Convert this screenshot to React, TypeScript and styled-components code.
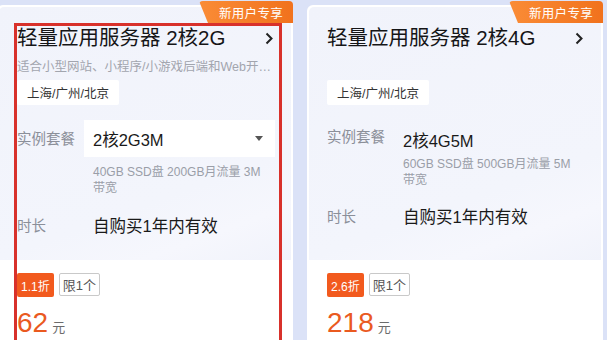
import React from "react";
import styled, { createGlobalStyle } from "styled-components";

const GlobalStyle = createGlobalStyle`
  html, body { margin: 0; padding: 0; background: #dbe2f7; overflow: hidden; }
  body { font-family: "Liberation Sans", "Noto Sans CJK SC", sans-serif; }
  * { box-sizing: border-box; }
`;

const Page = styled.div`
  display: flex;
  gap: 14px;
  margin-left: -3px;
  padding-top: 5px;
  width: 620px;
  height: 340px;
  overflow: hidden;
`;

const Card = styled.div`
  position: relative;
  flex: 0 0 296px;
  width: 296px;
  min-width: 0;
  display: flex;
  flex-direction: column;
  background: #ffffff;
  padding: 2px 2px 0;
  border-radius: 6px 6px 0 0;
  min-height: 345px;
`;

const Badge = styled.div`
  position: absolute;
  top: -4px;
  right: 0;
  width: 94px;
  height: 22px;
  display: flex;
  align-items: center;
  justify-content: center;
  padding-left: 10px;
  color: #fff;
  font-size: 12.5px;
  letter-spacing: 0.3px;
  background: linear-gradient(90deg, #fa8c36, #f1721d);
  border-radius: 4px 4px 0 0;
  clip-path: polygon(0 0, 100% 0, 100% 100%, 9px 100%);
`;

const Highlight = styled.div`
  position: absolute;
  left: 17px;
  top: 18px;
  width: 268px;
  height: 400px;
  border: 3px solid #d8312b;
  pointer-events: none;
`;

const Top = styled.div`
  height: 253px;
  min-width: 0;
  overflow: hidden;
  padding: 17px 18px 0;
  background: linear-gradient(160deg, #f1f3fb 0%, #f3f5fc 70%, #f6f7fd 85%, #f1f3fb 100%);
  border-radius: 5px 5px 0 0;
`;

const Header = styled.div`
  display: flex;
  align-items: center;
  justify-content: space-between;
  height: 28px;
`;

const Title = styled.div`
  font-size: 20.5px;
  line-height: 28px;
  color: #151517;
`;

const Desc = styled.div`
  margin-top: 6px;
  height: 18px;
  font-size: 12.5px;
  line-height: 18px;
  color: #a2a5ae;
  white-space: nowrap;
`;

const Region = styled.div`
  display: inline-flex;
  align-items: center;
  margin-top: 4px;
  height: 25px;
  padding: 0 10px;
  background: #ffffff;
  border-radius: 2px;
  font-size: 12.5px;
  color: #333;
`;

const Row = styled.div<{ $gap: number }>`
  display: grid;
  grid-template-columns: 76px 1fr;
  align-items: center;
  margin-top: ${(p) => p.$gap}px;
`;

const Label = styled.div`
  font-size: 14.5px;
  line-height: 22px;
  color: #8b8f99;
`;

const Value = styled.div`
  font-size: 16.5px;
  line-height: 22px;
  color: #1a1a1a;
`;

const PlainPlan = styled.div`
  padding-top: 9px;
  font-size: 16.5px;
  line-height: 24px;
  color: #1a1a1a;
`;

const Select = styled.div`
  display: flex;
  align-items: center;
  justify-content: space-between;
  height: 37px;
  margin: 0 -2px 0 -9px;
  padding: 0 12px 0 9px;
  background: #ffffff;
  font-size: 16.5px;
  color: #1a1a1a;
`;

const Spec = styled.div<{ $gap: number }>`
  margin: ${(p) => p.$gap}px 0 0 76px;
  font-size: 12px;
  line-height: 16px;
  color: #9a9ea8;
`;

const Bottom = styled.div`
  padding: 13px 18px 0;
`;

const Tags = styled.div`
  display: flex;
  gap: 5px;
`;

const Discount = styled.span`
  display: inline-flex;
  align-items: center;
  height: 24px;
  padding: 0 4px;
  background: #f25a1e;
  color: #fff;
  font-size: 12px;
  border-radius: 2px;
`;

const Limit = styled.span`
  display: inline-flex;
  align-items: center;
  height: 23px;
  padding: 0 3px;
  border: 1px solid #c9c9c9;
  border-radius: 2px;
  color: #555;
  font-size: 13px;
`;

const Price = styled.div`
  margin-top: 10px;
  display: flex;
  align-items: baseline;
  color: #ea5a1f;
  font-size: 28px;
  line-height: 32px;
`;

const Unit = styled.span`
  margin-left: 4px;
  font-size: 13px;
  color: #6b6b6b;
`;

const Chevron = () => (
  <svg width="8" height="13" viewBox="0 0 8 13">
    <polyline points="1.5,1.5 6.5,6.5 1.5,11.5" fill="none" stroke="#222" strokeWidth="2" />
  </svg>
);

const Caret = () => (
  <svg width="8" height="5" viewBox="0 0 8 5">
    <polygon points="0,0 8,0 4,5" fill="#555" />
  </svg>
);

type Plan = {
  title: string;
  desc?: string;
  select: boolean;
  plan: string;
  spec: string;
  discount: string;
  price: string;
  highlight?: boolean;
};

const plans: Plan[] = [
  {
    title: "轻量应用服务器 2核2G",
    desc: "适合小型网站、小程序/小游戏后端和Web开…",
    select: true,
    plan: "2核2G3M",
    spec: "40GB SSD盘 200GB月流量 3M 带宽",
    discount: "1.1折",
    price: "62",
    highlight: true,
  },
  {
    title: "轻量应用服务器 2核4G",
    select: false,
    plan: "2核4G5M",
    spec: "60GB SSD盘 500GB月流量 5M 带宽",
    discount: "2.6折",
    price: "218",
  },
];

const ProductCard = ({ p }: { p: Plan }) => (
  <Card>
    <Top>
      <Header>
        <Title>{p.title}</Title>
        <Chevron />
      </Header>
      <Desc>{p.desc ?? ""}</Desc>
      <Region>上海/广州/北京</Region>
      <Row $gap={15}>
        <Label>实例套餐</Label>
        {p.select ? (
          <Select>
            <span>{p.plan}</span>
            <Caret />
          </Select>
        ) : (
          <PlainPlan>{p.plan}</PlainPlan>
        )}
      </Row>
      <Spec $gap={p.select ? 7 : 3}>{p.spec}</Spec>
      <Row $gap={p.select ? 19 : 18}>
        <Label>时长</Label>
        <Value>自购买1年内有效</Value>
      </Row>
    </Top>
    <Bottom>
      <Tags>
        <Discount>{p.discount}</Discount>
        <Limit>限1个</Limit>
      </Tags>
      <Price>
        {p.price}
        <Unit>元</Unit>
      </Price>
    </Bottom>
    <Badge>新用户专享</Badge>
    {p.highlight && <Highlight />}
  </Card>
);

export default function App() {
  return (
    <>
      <GlobalStyle />
      <Page>
        {plans.map((p) => (
          <ProductCard key={p.plan} p={p} />
        ))}
      </Page>
    </>
  );
}
